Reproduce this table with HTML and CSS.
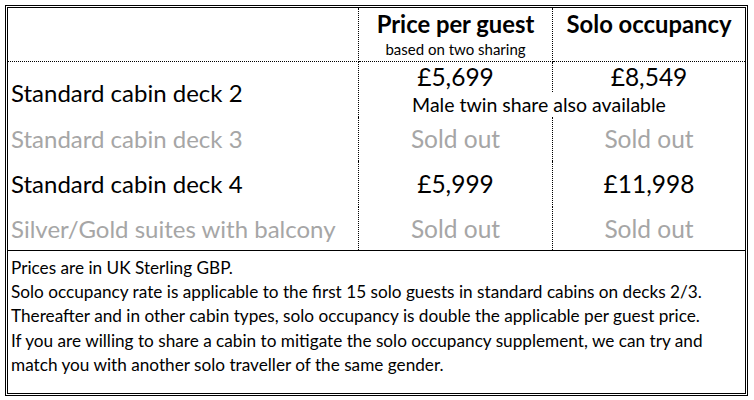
FILE: index.html
```html
<!DOCTYPE html>
<html lang="en">
<head>
<meta charset="utf-8">
<title>Cabin prices</title>
<link rel="stylesheet" href="styles.css">
</head>
<body>
<div class="sheet">
  <div class="grid">
    <div class="cell head label"></div>
    <div class="cell head col2">
      <span class="head-title">Price per guest</span>
      <span class="head-sub">based on two sharing</span>
    </div>
    <div class="cell head col3">
      <span class="head-title">Solo occupancy</span>
    </div>

    <div class="cell label cabin deck2">Standard cabin deck 2</div>
    <div class="cell col2 price">£5,699</div>
    <div class="cell col3 price">£8,549</div>
    <div class="cell note">Male twin share also available</div>

    <div class="cell label cabin muted">Standard cabin deck 3</div>
    <div class="cell col2 price muted">Sold out</div>
    <div class="cell col3 price muted">Sold out</div>

    <div class="cell label cabin">Standard cabin deck 4</div>
    <div class="cell col2 price">£5,999</div>
    <div class="cell col3 price">£11,998</div>

    <div class="cell label cabin muted">Silver/Gold suites with balcony</div>
    <div class="cell col2 price muted">Sold out</div>
    <div class="cell col3 price muted">Sold out</div>
  </div>
  <div class="notes">
    <p>Prices are in UK Sterling GBP.</p>
    <p>Solo occupancy rate is applicable to the first 15 solo guests in standard cabins on decks 2/3.</p>
    <p>Thereafter and in other cabin types, solo occupancy is double the applicable per guest price.</p>
    <p>If you are willing to share a cabin to mitigate the solo occupancy supplement, we can try and</p>
    <p>match you with another solo traveller of the same gender.</p>
  </div>
</div>
</body>
</html>
```

FILE: styles.css
```css
html, body {
  margin: 0;
  padding: 0;
  background: #ffffff;
}

body {
  padding: 5px;
  font-family: "Lato", "Liberation Sans", sans-serif;
  color: #000000;
}

.sheet {
  width: 743px;
  height: 391px;
  box-sizing: border-box;
  border: 3px double #000000;
  display: flex;
  flex-direction: column;
}

.grid {
  display: grid;
  grid-template-columns: 351px 194px 1fr;
  grid-template-rows: 54px 30px 25px 44px 46px 43px;
}

.cell {
  box-sizing: border-box;
  display: flex;
  align-items: center;
  font-size: 24px;
  line-height: 28px;
  white-space: nowrap;
}

.label {
  border-right: 1px dotted #000000;
  padding-left: 3px;
}

.col2 {
  border-right: 1px dotted #000000;
  justify-content: center;
}

.col3 {
  justify-content: center;
}

.price {
  font-size: 24.5px;
}

.head {
  border-bottom: 1px dotted #000000;
  flex-direction: column;
  justify-content: flex-start;
  align-items: center;
  padding-top: 2px;
}

.head.label {
  align-items: flex-start;
}

.head-title {
  font-weight: 700;
  font-size: 23.8px;
  line-height: 28px;
}

.head-sub {
  font-size: 15px;
  line-height: 17px;
  margin-top: 3px;
}

.deck2 {
  grid-row: span 2;
  padding-top: 7px;
}

.note {
  grid-column: 2 / span 2;
  justify-content: center;
  padding-right: 26px;
  font-size: 19.5px;
  line-height: 22px;
}

.muted {
  color: #a6a6a6;
}

.notes {
  flex: 1;
  border-top: 1px solid #000000;
  padding: 5px 3px 0;
  font-size: 17.2px;
  line-height: 24.2px;
}

.notes p {
  margin: 0;
  white-space: nowrap;
}
```
